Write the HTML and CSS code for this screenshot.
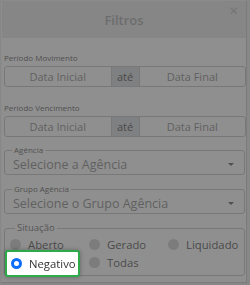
FILE: index.html
```html
<!DOCTYPE html>
<html lang="pt-BR">
<head>
    <meta charset="UTF-8">
    <title>Filtros</title>
    <link rel="stylesheet" href="styles.css">
</head>
<body>
    <div class="modal">
        <div class="modal-header">
            <h4 class="modal-title">Filtros</h4>
            <span class="close-btn">&times;</span>
        </div>

        <div class="modal-body">
            <label class="field-label">Período Movimento</label>
            <div class="date-range">
                <div class="date-input">Data Inicial</div>
                <div class="addon">até</div>
                <div class="date-input">Data Final</div>
            </div>

            <label class="field-label">Período Vencimento</label>
            <div class="date-range last">
                <div class="date-input">Data Inicial</div>
                <div class="addon">até</div>
                <div class="date-input">Data Final</div>
            </div>

            <fieldset class="select-box">
                <legend>Agência</legend>
                <div class="select-value">
                    <span>Selecione a Agência</span>
                    <span class="caret"></span>
                </div>
            </fieldset>

            <fieldset class="select-box">
                <legend>Grupo Agência</legend>
                <div class="select-value">
                    <span>Selecione o Grupo Agência</span>
                    <span class="caret"></span>
                </div>
            </fieldset>

            <fieldset class="situacao">
                <legend>Situação</legend>
                <div class="radio-grid">
                    <label class="radio"><span class="dot"></span>Aberto</label>
                    <label class="radio"><span class="dot"></span>Gerado</label>
                    <label class="radio"><span class="dot"></span>Liquidado</label>
                    <label class="radio highlight"><span class="dot checked"></span>Negativo</label>
                    <label class="radio"><span class="dot"></span>Todas</label>
                </div>
            </fieldset>
        </div>
    </div>

    <div class="overlay"></div>
</body>
</html>
```

FILE: styles.css
```css
body {
    margin: 0;
    font-family: 'Open Sans', sans-serif;
    background-color: #e6e6e6;
    width: 250px;
    height: 285px;
    overflow: hidden;
}

.modal {
    margin: 0 3px 0 1px;
    background-color: white;
    border-top: 1px solid #f4f4f4;
    height: 281px;
    border-bottom: 1px solid #c4c4c4;
    border-right: 1px solid #c4c4c4;
    border-left: 1px solid #f8f8f8;
}

.modal-header {
    position: relative;
    background-color: #e4e4e4;
    height: 37px;
    display: flex;
    align-items: center;
    justify-content: center;
}

.modal-title {
    margin: 0;
    font-size: 13px;
    font-weight: 600;
    color: #9a9a9a;
}

.close-btn {
    position: absolute;
    right: 8px;
    top: 0;
    font-size: 15px;
    line-height: 18px;
    color: #aaa;
}

.modal-body {
    padding: 15px 0 0 2px;
}

.field-label {
    display: block;
    font-size: 8px;
    color: #444;
    line-height: 10px;
    margin-bottom: 3px;
}

.date-range {
    display: flex;
    height: 19px;
    border: 1px solid #bdbdbd;
    border-radius: 3px;
    margin-bottom: 16px;
    font-size: 11px;
}

.date-range.last {
    margin-bottom: 8px;
}

.date-input {
    flex: 1;
    display: flex;
    align-items: center;
    justify-content: center;
    color: #777;
}

.addon {
    width: 27px;
    display: flex;
    align-items: center;
    justify-content: center;
    background-color: #cfd2d5;
    border-left: 1px solid #bdbdbd;
    border-right: 1px solid #bdbdbd;
    color: #333;
}

fieldset {
    margin: 0 1px 9px 0;
    padding: 0 8px;
    border: 1px solid #bdbdbd;
    border-radius: 3px;
}

legend {
    font-size: 8px;
    line-height: 10px;
    color: #444;
    padding: 0 2px;
    margin-left: -1px;
}

.select-value {
    display: flex;
    align-items: center;
    justify-content: space-between;
    height: 19px;
    font-size: 12.5px;
    color: #777;
}

.caret {
    width: 0;
    height: 0;
    border-left: 3px solid transparent;
    border-right: 3px solid transparent;
    border-top: 3px solid #444;
    margin-right: 2px;
}

.situacao {
    padding: 2px 4px 4px 5px;
    margin-bottom: 0;
}

.situacao legend {
    margin-left: 5px;
    font-size: 9.5px;
    color: #555;
}

.radio-grid {
    display: grid;
    grid-template-columns: 79px 79px 1fr;
}

.radio {
    display: flex;
    align-items: center;
    height: 18px;
    font-size: 11.3px;
    color: #333;
    white-space: nowrap;
}

.dot {
    flex-shrink: 0;
    width: 11px;
    height: 11px;
    border-radius: 50%;
    background-color: #c8c8c8;
    margin-right: 7px;
    box-sizing: border-box;
}

.dot.checked {
    background-color: white;
    border: 3.5px solid #0d6efd;
}

.highlight {
    position: relative;
    z-index: 10;
    box-sizing: border-box;
    height: 27px;
    background-color: white;
    border: 2px solid #2eaa4a;
    border-radius: 3px;
    margin: -3px 9px -6px -5px;
    padding: 0 2px 0 4px;
    box-shadow: 0 0 4px rgba(0, 0, 0, 0.3);
}

.overlay {
    position: fixed;
    top: 0;
    left: 0;
    right: 0;
    bottom: 0;
    background-color: rgba(85, 85, 85, 0.66);
}
```
